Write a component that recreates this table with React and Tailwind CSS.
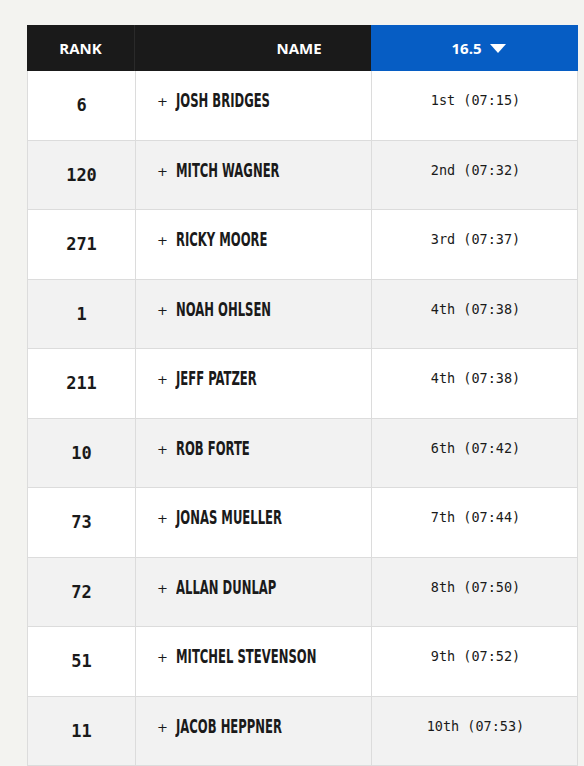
import React from "react";

const rows = [
  ["6", "JOSH BRIDGES", "1st (07:15)"],
  ["120", "MITCH WAGNER", "2nd (07:32)"],
  ["271", "RICKY MOORE", "3rd (07:37)"],
  ["1", "NOAH OHLSEN", "4th (07:38)"],
  ["211", "JEFF PATZER", "4th (07:38)"],
  ["10", "ROB FORTE", "6th (07:42)"],
  ["73", "JONAS MUELLER", "7th (07:44)"],
  ["72", "ALLAN DUNLAP", "8th (07:50)"],
  ["51", "MITCHEL STEVENSON", "9th (07:52)"],
  ["11", "JACOB HEPPNER", "10th (07:53)"],
];

export default function App() {
  return (
    <div className="min-h-[766px] w-[584px] bg-[#f3f3f0] pt-[25px] pl-[27px] overflow-hidden">
      <div className="w-[551px]">
        <div className="grid grid-cols-[108px_236px_207px] h-[46px] text-white text-[15px] font-bold" style={{ fontFamily: '"Open Sans", sans-serif' }}>
          <div className="bg-[#1a1a1a] flex items-center justify-center border-r border-[#2a2a2a]">RANK</div>
          <div className="bg-[#1a1a1a] flex items-center justify-center pl-[92px]">NAME</div>
          <div className="bg-[#065dc4] flex items-center justify-center gap-[8px] pl-[8px]">
            <span>16.5</span>
            <svg width="16" height="9" viewBox="0 0 16 9"><path d="M0 0 H16 L8 9 Z" fill="white" /></svg>
          </div>
        </div>
        {rows.map((r, i) => (
          <div
            key={i}
            className={`grid grid-cols-[108px_236px_207px] h-[69.5px] border-b border-l border-r border-[#dcdcdc] ${i % 2 === 0 ? "bg-white" : "bg-[#f2f2f2]"}`}
          >
            <div className="flex items-center justify-center border-r border-[#dcdcdc] text-[17px] font-bold text-[#1a1a1a] pt-[1px]" style={{ fontFamily: '"DejaVu Sans Mono", monospace' }}>
              {r[0]}
            </div>
            <div className="flex items-start border-r border-[#dcdcdc] pt-[18px] pl-[21px] text-[#1a1a1a] overflow-hidden">
              <span className="shrink-0 text-[13px] w-[19px] mt-[3px]" style={{ fontFamily: '"DejaVu Sans", sans-serif' }}>+</span>
              <span
                className="shrink-0 inline-block origin-left scale-x-[0.68] whitespace-nowrap text-[19px] font-bold leading-[22px]"
                style={{ fontFamily: '"DejaVu Sans Condensed", "DejaVu Sans", sans-serif' }}
              >
                {r[1]}
              </span>
            </div>
            <div className="flex items-start justify-center pt-[19px] text-[13.5px] text-[#1a1a1a]" style={{ fontFamily: '"DejaVu Sans Mono", monospace' }}>
              {r[2]}
            </div>
          </div>
        ))}
      </div>
    </div>
  );
}
